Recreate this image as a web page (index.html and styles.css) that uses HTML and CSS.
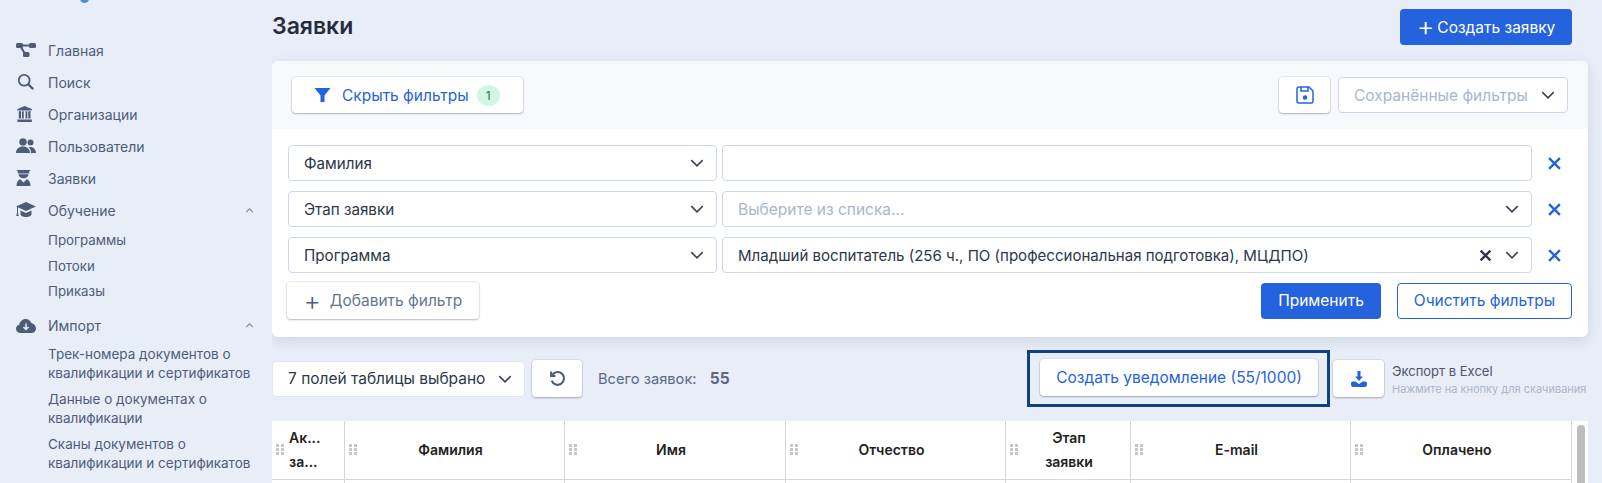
FILE: index.html
```html
<!DOCTYPE html>
<html lang="ru">

<head>
    <meta charset="UTF-8">
    <meta name="viewport" content="width=device-width, initial-scale=1.0">
    <link rel="stylesheet" href="styles.css">
    <title>Заявки</title>
</head>

<body>
    <div class="app">
        <aside class="sidebar">
            <div class="logo-tip"></div>
            <nav class="nav">
                <a class="nav-item">
                    <svg class="nav-icon" viewBox="0 0 20 16"><rect x="0" y="1" width="7" height="5" rx="1.500"/><rect x="13" y="1" width="7" height="5" rx="1.500"/><rect x="7" y="10" width="6.500" height="5" rx="1.500"/><path d="M6 2.500h8v2H6zM4 5.500l1.800-1 4.200 7-1.800 1z"/></svg>
                    <span>Главная</span>
                </a>
                <a class="nav-item">
                    <svg class="nav-icon" viewBox="0 0 20 20"><circle cx="8" cy="8" r="6" fill="none" stroke="currentColor" stroke-width="2"/><path d="M12.500 12.500L18 18" fill="none" stroke="currentColor" stroke-width="2.600"/></svg>
                    <span>Поиск</span>
                </a>
                <a class="nav-item">
                    <svg class="nav-icon" viewBox="0 0 20 20"><path d="M8.500 1l8 3.500V6H.5V4.500zM.5 16h16v3H.5zM2 7h2.500v8H2zM5.500 7h2v8h-2zM9.500 7h2v8h-2zM12.500 7H15v8h-2.500z"/></svg>
                    <span>Организации</span>
                </a>
                <a class="nav-item">
                    <svg class="nav-icon" viewBox="0 0 20 16"><circle cx="7" cy="4" r="3.700"/><circle cx="14.500" cy="4.500" r="3"/><path d="M0 15c0-4 3-6.500 7-6.500s7 2.500 7 6.500zM15 15c0-2.500-.8-4.500-2.200-5.800 3.500-.8 7.200 1.300 7.200 5.800z"/></svg>
                    <span>Пользователи</span>
                </a>
                <a class="nav-item">
                    <svg class="nav-icon" viewBox="0 0 20 16"><path d="M0 0h15l-1.800 1.200V3.500H1.800V1.200z"/><path d="M2.500 4.300h10c0 2.300-2.200 4-5 4s-5-1.700-5-4zM.5 16c0-3.200 1-5.800 3.800-6.700l3.200 3.200 3.200-3.200c2.800.9 3.800 3.500 3.800 6.700z"/></svg>
                    <span>Заявки</span>
                </a>
                <a class="nav-item">
                    <svg class="nav-icon" viewBox="0 0 20 16"><path d="M10 0l10 4.500-10 4.500L0 4.500zM4.500 8.500L10 11l5.500-2.500V12c0 1.800-2.500 3-5.500 3s-5.500-1.200-5.500-3z"/><path d="M1 5h1v6l.8 3H.2L1 11z"/></svg>
                    <span>Обучение</span>
                    <svg class="nav-chevron" viewBox="0 0 10 6"><path d="M1 5l4-4 4 4"/></svg>
                </a>
                <div class="sub-list sub-list-short">
                    <a class="sub-item">Программы</a>
                    <a class="sub-item">Потоки</a>
                    <a class="sub-item">Приказы</a>
                </div>
                <a class="nav-item nav-item-import">
                    <svg class="nav-icon" viewBox="0 0 20 14"><path d="M4.500 14C2 14 0 12.200 0 9.800 0 7.800 1.300 6.300 3.200 5.800 3.800 2.500 6.500 0 9.500 0c2.700 0 4.800 1.500 5.800 4C18 4.500 20 6.800 20 9.500c0 2.500-2 4.500-4.500 4.500z"/><path d="M10 4.500v5.500M7.500 8l2.500 2.500L12.500 8" fill="none" stroke="#e8eef8" stroke-width="1.500"/></svg>
                    <span>Импорт</span>
                    <svg class="nav-chevron" viewBox="0 0 10 6"><path d="M1 5l4-4 4 4"/></svg>
                </a>
                <div class="sub-list">
                    <a class="sub-item sub-item-long">Трек-номера документов о квалификации и сертификатов</a>
                    <a class="sub-item sub-item-long">Данные о документах о квалификации</a>
                    <a class="sub-item sub-item-long">Сканы документов о квалификации и сертификатов</a>
                </div>
            </nav>
        </aside>

        <main class="content">
            <header class="page-head">
                <h1 class="page-title">Заявки</h1>
                <button class="btn btn-primary btn-create"><span class="btn-plus">+</span>Создать заявку</button>
            </header>

            <section class="panel">
                <div class="panel-head">
                    <button class="btn btn-raised btn-hide">
                        <svg class="icon-filter" viewBox="0 0 16 16"><path d="M0 1h16L10 8.500V15H6V8.500z"/></svg>
                        <span>Скрыть фильтры</span>
                        <span class="count">1</span>
                    </button>
                    <div class="panel-head-right">
                        <button class="btn btn-raised btn-save">
                            <svg class="icon-save" viewBox="0 0 18 18"><path d="M3 1h10l4 4v10a2 2 0 0 1-2 2H3a2 2 0 0 1-2-2V3a2 2 0 0 1 2-2z"/><path d="M5 1v4h7V1"/><circle cx="9" cy="11.500" r="1.500" fill="currentColor"/></svg>
                        </button>
                        <div class="select select-saved">
                            <span class="placeholder">Сохранённые фильтры</span>
                            <svg class="chevron" viewBox="0 0 12 7"><path d="M1 1l5 5 5-5"/></svg>
                        </div>
                    </div>
                </div>

                <div class="panel-body">
                    <div class="filter-row">
                        <div class="select select-field">
                            <span>Фамилия</span>
                            <svg class="chevron" viewBox="0 0 12 7"><path d="M1 1l5 5 5-5"/></svg>
                        </div>
                        <div class="select select-value"></div>
                        <svg class="icon-remove" viewBox="0 0 12 12"><path d="M1 1l10 10M11 1L1 11"/></svg>
                    </div>
                    <div class="filter-row">
                        <div class="select select-field">
                            <span>Этап заявки</span>
                            <svg class="chevron" viewBox="0 0 12 7"><path d="M1 1l5 5 5-5"/></svg>
                        </div>
                        <div class="select select-value">
                            <span class="placeholder">Выберите из списка...</span>
                            <svg class="chevron" viewBox="0 0 12 7"><path d="M1 1l5 5 5-5"/></svg>
                        </div>
                        <svg class="icon-remove" viewBox="0 0 12 12"><path d="M1 1l10 10M11 1L1 11"/></svg>
                    </div>
                    <div class="filter-row">
                        <div class="select select-field">
                            <span>Программа</span>
                            <svg class="chevron" viewBox="0 0 12 7"><path d="M1 1l5 5 5-5"/></svg>
                        </div>
                        <div class="select select-value">
                            <span>Младший воспитатель (256 ч., ПО (профессиональная подготовка), МЦДПО)</span>
                            <svg class="icon-clear" viewBox="0 0 12 12"><path d="M1.500 1.500l9 9M10.500 1.500l-9 9"/></svg>
                            <svg class="chevron" viewBox="0 0 12 7"><path d="M1 1l5 5 5-5"/></svg>
                        </div>
                        <svg class="icon-remove" viewBox="0 0 12 12"><path d="M1 1l10 10M11 1L1 11"/></svg>
                    </div>
                    <div class="panel-actions">
                        <button class="btn btn-raised btn-add"><span class="btn-add-plus">+</span>Добавить фильтр</button>
                        <div class="panel-actions-right">
                            <button class="btn btn-primary btn-apply">Применить</button>
                            <button class="btn btn-outline btn-clear">Очистить фильтры</button>
                        </div>
                    </div>
                </div>
            </section>

            <div class="toolbar">
                <div class="select select-columns">
                    <span>7 полей таблицы выбрано</span>
                    <svg class="chevron" viewBox="0 0 12 7"><path d="M1 1l5 5 5-5"/></svg>
                </div>
                <button class="btn btn-raised btn-reset">
                    <svg class="icon-reset" viewBox="0 0 16 16"><path d="M3.200 4.500A6 6 0 1 1 2.500 10"/><path d="M2 1.500v4h4"/></svg>
                </button>
                <div class="total">Всего заявок: <b>55</b></div>
                <div class="highlight">
                    <button class="btn btn-raised btn-notify">Создать уведомление (55/1000)</button>
                </div>
                <button class="btn btn-raised btn-excel">
                    <svg class="icon-excel" viewBox="0 0 16 16"><path d="M6.500 0h3v5.500H12L8 10 4 5.500h2.500z"/><path d="M1.500 10.500h3L8 13l3.500-2.500h3c1 0 1.500 1 1.500 2.500s-.5 3-2 3H2c-1.500 0-2-1.500-2-3s.5-2.500 1.500-2.500z"/></svg>
                </button>
                <div class="excel-note">
                    <div class="excel-title">Экспорт в Excel</div>
                    <div class="excel-hint">Нажмите на кнопку для скачивания</div>
                </div>
            </div>

            <section class="table">
                <div class="table-grid">
                    <div class="th th-left"><i class="grip"></i><span>Ак...<br>за...</span></div>
                    <div class="th"><i class="grip"></i><span>Фамилия</span></div>
                    <div class="th"><i class="grip"></i><span>Имя</span></div>
                    <div class="th"><i class="grip"></i><span>Отчество</span></div>
                    <div class="th th-narrow"><i class="grip"></i><span>Этап<br>заявки</span></div>
                    <div class="th"><i class="grip"></i><span>E-mail</span></div>
                    <div class="th"><i class="grip"></i><span>Оплачено</span></div>
                    <div class="td"></div>
                    <div class="td"></div>
                    <div class="td"></div>
                    <div class="td"></div>
                    <div class="td"></div>
                    <div class="td"></div>
                    <div class="td"></div>
                </div>
                <div class="scroll-track"><div class="scroll-thumb"></div></div>
            </section>
        </main>
    </div>
</body>

</html>
```

FILE: styles.css
```css
* {
    box-sizing: border-box;
}

html,
body {
    margin: 0;
    height: 483px;
    overflow: hidden;
}

body {
    font-family: Inter, "Noto Sans", sans-serif;
    background: #e8edf8;
    color: #2d3748;
    font-size: 15px;
}

.app {
    display: flex;
    height: 483px;
}

svg {
    flex: none;
    display: block;
}

/* sidebar */

.sidebar {
    width: 272px;
    flex: none;
    background: #e8eef8;
    position: relative;
}

.logo-tip {
    position: absolute;
    left: 80px;
    top: -6px;
    width: 9px;
    height: 9px;
    border-radius: 50%;
    background: #4a90d9;
}

.nav {
    padding: 34px 0 0 16px;
    color: #4d5d78;
}

.nav-item {
    display: flex;
    align-items: center;
    height: 32px;
    font-size: 14px;
    padding-right: 16px;
}

.nav-item span {
    flex: 1;
}

.nav-icon {
    width: 20px;
    height: 18px;
    margin-right: 12px;
    fill: currentColor;
}

.nav-chevron {
    width: 9px;
    height: 5px;
    fill: none;
    stroke: #7c8aa3;
    stroke-width: 1.300;
    margin-right: 2px;
}

.nav-item-import {
    margin-top: 5px;
}

.sub-list {
    padding-left: 32px;
    font-size: 13.500px;
}

.sub-list-short {
    padding-top: 2px;
    font-size: 13.300px;
}

.sub-item {
    display: block;
    line-height: 19px;
    padding: 3px 0;
}

.sub-list-short .sub-item {
    padding: 3px 0 3.500px;
}

.sub-item-long {
    padding: 3px 0 4px;
}

/* main column */

.content {
    flex: 1;
    min-width: 0;
    padding: 9px 14px 0 0;
}

.page-head {
    display: flex;
    justify-content: space-between;
    align-items: center;
    height: 36px;
    padding-right: 16px;
}

.page-title {
    margin: 0 0 3px;
    font-size: 23px;
    font-weight: 600;
    color: #252d3d;
}

.btn {
    font-family: inherit;
    font-size: 15.500px;
    height: 36px;
    border-radius: 4px;
    border: 0;
    padding: 0;
    display: flex;
    align-items: center;
    justify-content: center;
}

.btn-primary {
    background: #2563de;
    color: #fff;
}

.btn-raised {
    background: #fff;
    color: #2563de;
    box-shadow: 0 1px 2px rgba(60, 66, 87, 0.35), 0 0 0 1px rgba(60, 66, 87, 0.08);
}

.btn-outline {
    background: #fff;
    color: #2563de;
    border: 1px solid #2563de;
}

.btn-create {
    width: 172px;
}

.btn-plus {
    font-size: 27px;
    line-height: 20px;
    font-weight: 300;
    margin-right: 3px;
}

/* filter panel */

.panel {
    margin-top: 16px;
    background: #fff;
    border-radius: 6px;
    box-shadow: 0 4px 14px rgba(60, 66, 110, 0.14);
    overflow: hidden;
}

.panel-head {
    display: flex;
    justify-content: space-between;
    align-items: center;
    height: 68px;
    padding: 0 20px;
    background: #f8f9fd;
}

.panel-head-right {
    display: flex;
    gap: 8px;
}

.btn-hide {
    width: 231px;
    justify-content: flex-start;
    padding-left: 22px;
}

.icon-filter {
    width: 17px;
    height: 16px;
    margin-right: 11px;
    fill: #2563de;
}

.count {
    width: 23px;
    height: 21px;
    margin-left: 8px;
    border-radius: 50%;
    background: #d2f6e3;
    color: #1d7a46;
    font-size: 12px;
    line-height: 21px;
    text-align: center;
}

.btn-save {
    width: 51px;
}

.icon-save {
    width: 18px;
    height: 18px;
    fill: none;
    stroke: currentColor;
    stroke-width: 1.500;
}

.select {
    display: flex;
    align-items: center;
    height: 36px;
    background: #fff;
    border: 1px solid #ccd8ea;
    border-radius: 4px;
    padding: 0 12px 0 15px;
    font-size: 15.200px;
    color: #2d3748;
}

.select > span {
    flex: 1;
    white-space: nowrap;
}

.select > .placeholder {
    color: #a9b6cc;
    font-size: 15.500px;
}

.chevron {
    width: 14px;
    height: 8px;
    fill: none;
    stroke: #3a4354;
    stroke-width: 1.400;
}

.select-saved {
    width: 230px;
}

.panel-body {
    padding: 16px 16px 18px;
}

.filter-row {
    display: flex;
    align-items: center;
    gap: 5px;
    margin-bottom: 10px;
}

.select-field {
    width: 429px;
}

.select-value {
    width: 810px;
    font-size: 15.050px;
}

.icon-clear {
    width: 13px;
    height: 13px;
    margin-right: 13px;
    fill: none;
    stroke: #2d3748;
    stroke-width: 2.200;
}

.icon-remove {
    width: 13px;
    height: 13px;
    margin-left: 11px;
    fill: none;
    stroke: #2563de;
    stroke-width: 2.200;
}

.panel-actions {
    display: flex;
    justify-content: space-between;
    align-items: center;
    margin-top: -1px;
}

.panel-actions-right {
    display: flex;
    gap: 16px;
}

.btn-add {
    width: 192px;
    height: 37px;
    margin-left: -1px;
    color: #677690;
    box-shadow: 0 1px 2px rgba(60, 66, 87, 0.3), 0 0 0 1px rgba(60, 66, 87, 0.08);
}

.btn-add-plus {
    font-size: 26px;
    line-height: 20px;
    font-weight: 300;
    color: #4d5d78;
    margin-right: 9px;
}

.btn-apply {
    width: 120px;
}

.btn-clear {
    width: 175px;
}

/* toolbar over the table */

.toolbar {
    display: flex;
    align-items: center;
    height: 37px;
    margin-top: 23px;
}

.select-columns {
    width: 253px;
    border-color: #dfe5f1;
    font-size: 15.500px;
}

.btn-reset {
    width: 50px;
    height: 37px;
    margin-left: 7px;
}

.icon-reset {
    width: 17px;
    height: 17px;
    fill: none;
    stroke: #4d5d78;
    stroke-width: 2;
}

.total {
    margin-left: 16px;
    width: 429px;
    color: #5a6a85;
    font-size: 14.700px;
    white-space: nowrap;
}

.total b {
    font-size: 15.500px;
    font-weight: 700;
    margin-left: 9px;
}

.highlight {
    width: 303px;
    height: 57px;
    margin: -10px 0;
    padding: 6px 9px 0 10px;
    border: 3px solid #0f4280;
}

.btn-notify {
    width: 278px;
    height: 37px;
}

.btn-excel {
    width: 51px;
    height: 37px;
    margin-left: 3px;
}

.icon-excel {
    width: 16px;
    height: 16px;
    fill: #2563de;
}

.excel-note {
    margin-left: 8px;
    padding-top: 3px;
    white-space: nowrap;
}

.excel-title {
    font-size: 13px;
    color: #4b5567;
    line-height: 16px;
}

.excel-hint {
    font-size: 11px;
    color: #a9b6cc;
    line-height: 16px;
    margin-top: 2px;
}

/* table */

.table {
    display: flex;
    margin-top: 24px;
    height: 70px;
    background: #fff;
}

.table-grid {
    display: grid;
    grid-template-columns: 73px 220px 221px 220px 125px 220px 221px;
    grid-template-rows: 59px 20px;
}

.th,
.td {
    border-right: 1px solid #d6d6d6;
    border-bottom: 1px solid #d6d6d6;
}

.th {
    position: relative;
    display: flex;
    align-items: center;
    justify-content: center;
    padding: 0 8px 0 0;
    font-size: 14px;
    font-weight: 600;
    line-height: 24px;
    color: #222;
    text-align: center;
}

.th-left {
    justify-content: flex-start;
    text-align: left;
    padding: 0 0 0 17px;
}

.th-narrow {
    padding: 0 0 0 2px;
}

.grip {
    position: absolute;
    left: 4px;
    top: 23px;
    width: 8px;
    height: 12px;
    background-image: radial-gradient(circle at 1.500px 1.500px, #c6c6c6 1.500px, transparent 1.600px);
    background-size: 5px 4px;
}

.scroll-track {
    flex: 1;
    padding: 4px 3px 0 5px;
}

.scroll-thumb {
    height: 70px;
    background: #bcbcbc;
    border-radius: 4px;
}
```
